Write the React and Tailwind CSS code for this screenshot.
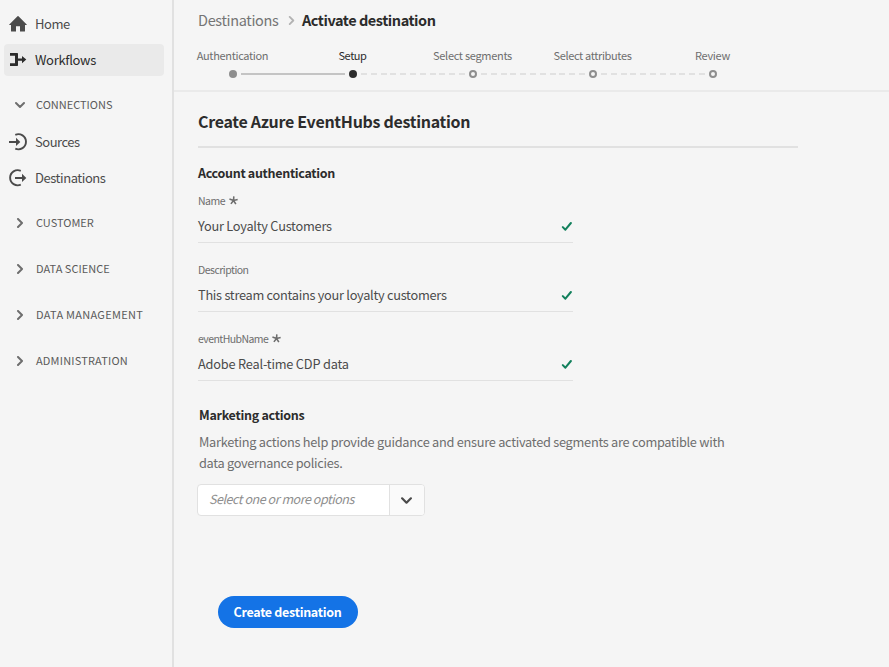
const HomeIcon = () => (
  <svg className="h-[18px] w-[18px] text-[#4b4b4b]" viewBox="0 0 18 18" fill="currentColor">
    <path d="M17.700 9.400 9.500 1.300a.7.7 0 0 0-1 0L.3 9.400c-.3.3-.1.7.3.7H2v6a.5.5 0 0 0 .5.5H7V11.300h4v5.300h4.500a.5.5 0 0 0 .5-.5v-6h1.400c.4 0 .6-.4.3-.7z" />
  </svg>
);

const WorkflowsIcon = () => (
  <svg className="h-[18px] w-[18px] text-[#2c2c2c]" viewBox="0 0 18 18" fill="currentColor">
    <path d="M1 2H8.300a.7.7 0 0 1 .7.7V7.400h4V5L17.300 8.600 13 12.200V9.800H9v4.400a.7.7 0 0 1-.7.7H1v-2.600h5V4.700H1z" />
  </svg>
);

const SourcesIcon = () => (
  <svg className="h-[18px] w-[18px] text-[#4b4b4b]" viewBox="0 0 18 18" fill="none">
    <path d="M6.300 1.800A7.600 7.600 0 1 1 6.300 15.700" stroke="currentColor" strokeWidth="1.900" />
    <path d="M0 8H7V4.800l4.300 4.100L7 13V9.900H0z" fill="currentColor" />
  </svg>
);

const DestinationsIcon = () => (
  <svg className="h-[18px] w-[18px] text-[#4b4b4b]" viewBox="0 0 18 18" fill="none">
    <path d="M11.800 1.800A7.600 7.600 0 1 0 11.800 15.700" stroke="currentColor" strokeWidth="1.900" />
    <path d="M6 8H13V4.800l4.300 4.100L13 13V9.900H6z" fill="currentColor" />
  </svg>
);

const Chevron = ({ className }) => (
  <svg className={className} viewBox="0 0 10 10" fill="none" stroke="currentColor" strokeWidth="2" strokeLinecap="round" strokeLinejoin="round">
    <path d="M3 1 7 5 3 9" />
  </svg>
);

const Check = () => (
  <svg className="h-[11px] w-[11px] text-[#12805c]" viewBox="0 0 11 11" fill="none" stroke="currentColor" strokeWidth="2" strokeLinecap="round" strokeLinejoin="round">
    <path d="M1.800 6.100 4.400 8.700 9.900 2" />
  </svg>
);

const Asterisk = () => (
  <svg className="mb-px ml-[4px] h-[9px] w-[9px] text-[#6e6e6e]" viewBox="0 0 8 8" stroke="currentColor" strokeWidth="1.400">
    <path d="M4 4 4.300.3M4 4 .4 2.700M4 4 7.700 3.200M4 4 1.700 7M4 4 6.100 7.200" />
  </svg>
);

const NavItem = ({ icon, label, active, tracking }) => (
  <div className={`flex h-8 items-center rounded pl-[5px] text-[13px] ${active ? "bg-[#eaeaea] text-[#2c2c2c]" : "text-[#4b4b4b]"}`}>
    {icon}
    <span className={`ml-2 ${tracking}`}>{label}</span>
  </div>
);

const NavSection = ({ label, open, tracking }) => (
  <div className="flex h-[46px] items-center pl-[11px] text-[11px] text-[#5a5a5a]">
    <Chevron className={`h-[10px] w-[10px] text-[#6e6e6e] ${open ? "rotate-90" : ""}`} />
    <span className={`ml-[11px] pb-[2px] ${tracking}`}>{label}</span>
  </div>
);

const steps = [
  { label: "Authentication", state: "done", tracking: "tracking-[-0.33px]" },
  { label: "Setup", state: "current", tracking: "tracking-[-0.44px]" },
  { label: "Select segments", state: "next", tracking: "tracking-[-0.3px]" },
  { label: "Select attributes", state: "next", tracking: "tracking-[-0.36px]" },
  { label: "Review", state: "next", tracking: "tracking-[-0.3px]" },
];

const dotStyles = {
  done: "bg-[#8e8e8e]",
  current: "bg-[#2c2c2c]",
  next: "border-2 border-[#8e8e8e]",
};

const dashes = Array.from({ length: 11 }, (_, i) => i);

const Stepper = () => (
  <div className="-ml-px">
    <div className="flex h-[20px] items-center text-[11px]">
      {steps.map((s) => (
        <span key={s.label} className={`w-[120px] pr-px text-center ${s.tracking} ${s.state === "current" ? "text-[#2c2c2c]" : "text-[#6e6e6e]"}`}>
          {s.label}
        </span>
      ))}
    </div>
    <div className="mt-px flex h-4 items-center pl-14">
      {steps.map((s, i) => (
        <div key={s.label} className="flex items-center">
          <span className={`h-2 w-2 rounded-full ${dotStyles[s.state]}`} />
          {i === 0 && <span className="mx-1 h-[2px] w-[104px] bg-[#c4c4c4]" />}
          {i > 0 && i < 4 && (
            <span className="mx-1 flex w-[104px] justify-between">
              {dashes.map((d) => (
                <span key={d} className="h-[2px] w-[6px] bg-[#e1e1e1]" />
              ))}
            </span>
          )}
        </div>
      ))}
    </div>
  </div>
);

const Field = ({ label, required, value, labelTracking, tracking }) => (
  <div className="h-[69px] w-[375px]">
    <div className="flex h-[18px] items-center text-[10.5px] text-[#6e6e6e]">
      <span className={labelTracking}>{label}</span>
      {required && <Asterisk />}
    </div>
    <div className="flex h-[33px] items-center justify-between border-b border-[#e1e1e1] pr-px text-[12.75px] text-[#4b4b4b]">
      <span className={tracking}>{value}</span>
      <Check />
    </div>
  </div>
);

export default function App() {
  return (
    <div className="flex h-[667px] w-[889px] overflow-hidden whitespace-nowrap bg-[#f5f5f5] font-['Noto_Sans_CJK_JP','Open_Sans',sans-serif]">
      <nav className="w-[174px] shrink-0 border-r-2 border-[#e1e1e1] pl-1 pr-2 pt-2">
        <NavItem icon={<HomeIcon />} label="Home" tracking="tracking-[-0.45px]" />
        <div className="h-1" />
        <NavItem icon={<WorkflowsIcon />} label="Workflows" active tracking="tracking-[-0.31px]" />
        <div className="mt-[6px]">
          <NavSection label="CONNECTIONS" open tracking="tracking-[0px]" />
        </div>
        <div className="-mt-[2px] flex flex-col gap-1">
          <NavItem icon={<SourcesIcon />} label="Sources" tracking="tracking-[-0.5px]" />
          <NavItem icon={<DestinationsIcon />} label="Destinations" tracking="tracking-[-0.45px]" />
        </div>
        <div className="mt-[6px]">
          <NavSection label="CUSTOMER" tracking="tracking-[0px]" />
          <NavSection label="DATA SCIENCE" tracking="tracking-[0.03px]" />
          <NavSection label="DATA MANAGEMENT" tracking="tracking-[0.28px]" />
          <NavSection label="ADMINISTRATION" tracking="tracking-[0.18px]" />
        </div>
      </nav>

      <main className="min-w-0 flex-1">
        <header className="h-[92px] border-b-2 border-[#eaeaea] pt-[8px]">
          <div className="flex h-6 items-center pl-6 text-[14.5px]">
            <span className="w-[81px] tracking-[-0.34px] text-[#747474]">Destinations</span>
            <Chevron className="ml-[8px] mt-px h-[9px] w-[9px] text-[#b3b3b3]" />
            <span className="ml-[6px] font-bold tracking-[-0.46px] text-[#2c2c2c]">Activate destination</span>
          </div>
          <div className="mt-[13px]">
            <Stepper />
          </div>
        </header>

        <section className="pl-6">
          <h1 className="h-[56px] w-[600px] border-b-2 border-[#e1e1e1] pt-[17px] text-[16px] font-bold leading-6 tracking-[-0.29px] text-[#2c2c2c]">
            Create Azure EventHubs destination
          </h1>
          <h2 className="mt-[15px] h-[29px] text-[12.5px] font-bold leading-5 tracking-[-0.31px] text-[#2c2c2c]">Account authentication</h2>
          <Field label="Name" required value="Your Loyalty Customers" labelTracking="tracking-[-0.5px]" tracking="tracking-[-0.23px]" />
          <Field label="Description" value="This stream contains your loyalty customers" labelTracking="tracking-[-0.52px]" tracking="tracking-[-0.26px]" />
          <Field label="eventHubName" required value="Adobe Real-time CDP data" labelTracking="tracking-[-0.57px]" tracking="tracking-[-0.19px]" />

          <div className="ml-px mt-[6px]">
            <h2 className="text-[12.5px] font-bold leading-5 tracking-[-0.27px] text-[#2c2c2c]">Marketing actions</h2>
            <p className="mt-[6px] text-[12.75px] leading-[21px] tracking-[-0.26px] text-[#6e6e6e]">
              Marketing actions help provide guidance and ensure activated segments are compatible with
              <br />
              <span className="tracking-[-0.3px]">data governance policies.</span>
            </p>
          </div>

          <div className="-ml-px mt-[11px] flex h-8 w-[228px] overflow-hidden rounded border border-[#e1e1e1] bg-white">
            <div className="flex flex-1 items-center pb-[2px] pl-[11px] text-[12.5px] italic tracking-[-0.45px] text-[#8e8e8e]">Select one or more options</div>
            <div className="flex w-[35px] items-center justify-center border-l border-[#e1e1e1] bg-[#fafafa] pr-px">
              <Chevron className="h-[11px] w-[11px] rotate-90 text-[#4b4b4b]" />
            </div>
          </div>

          <button className="ml-5 mt-20 flex h-8 w-[140px] items-center justify-center rounded-full bg-[#1473e6] pr-px text-[12.5px] font-bold tracking-[-0.3px] text-white">
            Create destination
          </button>
        </section>
      </main>
    </div>
  );
}
